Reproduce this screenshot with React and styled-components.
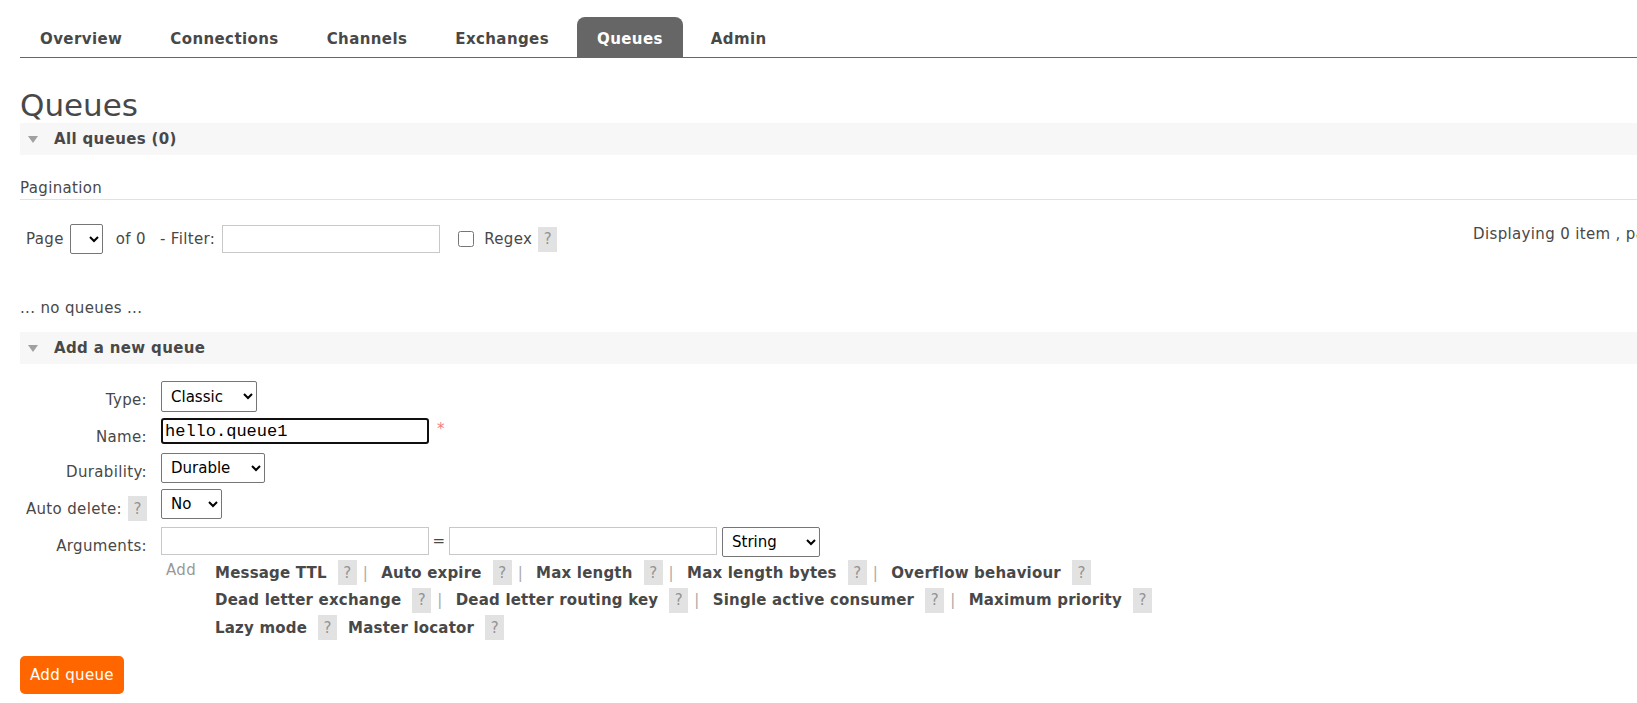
import React from 'react';
import styled, { createGlobalStyle } from 'styled-components';

const GlobalStyle = createGlobalStyle`
  html, body {
    margin: 0;
    padding: 0;
    overflow: hidden;
    background: #fff;
  }
  body {
    font-family: 'DejaVu Sans', Verdana, sans-serif;
    font-size: 15px;
    letter-spacing: 0.35px;
    color: #484848;
  }
`;

const Page = styled.div`
  width: 1695px;
  padding: 17px 0 0 20px;
`;

const Menu = styled.ul`
  display: flex;
  margin: 0;
  padding: 0;
  list-style: none;
  border-bottom: 1px solid #666;
`;

const Tab = styled.li`
  height: 40px;
  box-sizing: border-box;
  padding: 4px 20px 0;
  line-height: 36px;
  margin-right: 8px;
  font-size: 15px;
  font-weight: bold;
  letter-spacing: 0.4px;
  color: ${p => (p.$selected ? '#fff' : '#484848')};
  background: ${p => (p.$selected ? '#666' : 'transparent')};
  border-radius: 8px 8px 0 0;
`;

const Title = styled.h1`
  margin: 30px 0 1px;
  font-size: 31px;
  line-height: 34px;
  font-weight: normal;
  letter-spacing: 0;
  color: #484848;
`;

const SectionHeader = styled.h2`
  display: flex;
  align-items: center;
  height: 32px;
  margin: 0;
  padding-left: 8px;
  background: #f7f7f7;
  font-size: 15px;
  font-weight: bold;
  color: #484848;
`;

const Arrow = styled.span`
  width: 0;
  height: 0;
  margin: 1px 16px 0 0;
  border-left: 5px solid transparent;
  border-right: 5px solid transparent;
  border-top: 7px solid #a0a0a0;
`;

const SubHeading = styled.h3`
  margin: 24px 0 0;
  padding-bottom: 2px;
  font-size: 15px;
  line-height: 18px;
  font-weight: normal;
  border-bottom: 1px solid #e2e2e2;
`;

const PaginationRow = styled.div`
  display: flex;
  align-items: center;
  height: 30px;
  margin-top: 24px;
  padding-left: 6px;
`;

const Text = styled.span`
  margin-left: ${p => p.$ml || 0}px;
  line-height: 18px;
  white-space: nowrap;
`;

const Displaying = styled.span`
  align-self: flex-start;
  margin-left: auto;
  padding-top: 1px;
  line-height: 18px;
  white-space: nowrap;
`;

const Select = styled.select`
  width: ${p => p.$w}px;
  height: ${p => p.$h || 30}px;
  margin-left: ${p => p.$ml || 0}px;
  padding: 0 2px 0 5px;
  font-family: 'DejaVu Sans', Verdana, sans-serif;
  font-size: 15px;
  color: #000;
  background: #fff;
  border: 1px solid #767676;
  border-radius: 2px;
  box-sizing: border-box;
`;

const TextInput = styled.input`
  width: ${p => p.$w}px;
  height: 28px;
  margin-left: ${p => p.$ml || 0}px;
  padding: 0 3px;
  font-family: 'DejaVu Sans', Verdana, sans-serif;
  font-size: 15px;
  border: 1px solid #c8c8c8;
  border-radius: 0;
  box-sizing: border-box;
  outline: none;
`;

const NameInput = styled.input`
  width: 268px;
  height: 26px;
  padding: 0 2px;
  font-family: 'Liberation Mono', 'DejaVu Sans Mono', monospace;
  font-size: 17px;
  letter-spacing: 0;
  color: #000;
  border: 2px solid #101010;
  border-radius: 3px;
  box-sizing: border-box;
  outline: none;
`;

const Checkbox = styled.input`
  width: 16px;
  height: 16px;
  margin: 0 0 0 18px;
`;

const Help = styled.span`
  display: inline-flex;
  align-items: center;
  justify-content: center;
  flex: none;
  width: 19px;
  height: 25px;
  margin-left: ${p => p.$ml || 0}px;
  background: #e2e2e2;
  color: #939393;
  font-weight: normal;
  font-size: 15px;
  letter-spacing: 0;
`;

const NoItems = styled.p`
  margin: 45px 0 15px;
  line-height: 18px;
`;

const Form = styled.div`
  display: grid;
  grid-template-columns: 127px auto;
  column-gap: 14px;
  row-gap: 6px;
  align-items: start;
  margin-top: 17px;
`;

const Label = styled.label`
  display: flex;
  justify-content: flex-end;
  align-items: center;
  padding-top: ${p => (p.$withHelp ? 7 : 10)}px;
  line-height: 18px;
  white-space: nowrap;
`;

const Field = styled.div`
  display: flex;
  align-items: flex-start;
  height: ${p => (p.$h ? `${p.$h}px` : 'auto')};
`;

const Required = styled.span`
  margin: 2px 0 0 8px;
  color: #f08080;
  font-size: 15px;
`;

const ArgsBlock = styled.div`
  display: flex;
  flex-direction: column;
`;

const ArgsInputs = styled.div`
  display: flex;
  align-items: flex-start;
`;

const Equals = styled.span`
  width: 20px;
  line-height: 28px;
  text-align: center;
`;

const ArgLinks = styled.div`
  display: flex;
  margin-top: 2px;
`;

const AddLabel = styled.span`
  width: 54px;
  padding-left: 5px;
  box-sizing: border-box;
  line-height: 22px;
  color: #999;
`;

const LinkRows = styled.div`
  display: flex;
  flex-direction: column;
`;

const LinkRow = styled.div`
  display: flex;
  align-items: center;
  height: 27.5px;
`;

const ArgLink = styled.span`
  font-weight: bold;
  letter-spacing: 0.2px;
  color: #484848;
  white-space: nowrap;
`;

const Sep = styled.span`
  margin: 0 13px 0 6px;
  color: #aaa;
`;

const Gap = styled.span`
  width: 11px;
`;

const AddButton = styled.button`
  display: block;
  height: 38px;
  margin-top: 14px;
  padding: 0 10px;
  font-family: 'DejaVu Sans', Verdana, sans-serif;
  font-size: 15px;
  letter-spacing: 0.35px;
  color: #fff;
  background: #f60;
  border: none;
  border-radius: 5px;
`;

const tabs = ['Overview', 'Connections', 'Channels', 'Exchanges', 'Queues', 'Admin'];

const argRows = [
  { sep: true, items: ['Message TTL', 'Auto expire', 'Max length', 'Max length bytes', 'Overflow behaviour'] },
  { sep: true, items: ['Dead letter exchange', 'Dead letter routing key', 'Single active consumer', 'Maximum priority'] },
  { sep: false, items: ['Lazy mode', 'Master locator'] },
];

const App = () => {
  return (
    <Page>
      <GlobalStyle />
      <Menu>
        {tabs.map(t => (
          <Tab key={t} $selected={t === 'Queues'}>{t}</Tab>
        ))}
      </Menu>

      <Title>Queues</Title>
      <SectionHeader>
        <Arrow />
        All queues (0)
      </SectionHeader>

      <SubHeading>Pagination</SubHeading>
      <PaginationRow>
        <Text>Page</Text>
        <Select $w={33} $ml={6} defaultValue="" />
        <Text $ml={13}>of 0</Text>
        <Text $ml={14}>- Filter:</Text>
        <TextInput $w={218} $ml={7} />
        <Checkbox type="checkbox" />
        <Text $ml={10}>Regex</Text>
        <Help $ml={6}>?</Help>
        <Displaying>Displaying 0 item , page 0 of 0</Displaying>
      </PaginationRow>

      <NoItems>... no queues ...</NoItems>

      <SectionHeader>
        <Arrow />
        Add a new queue
      </SectionHeader>

      <Form>
        <Label>Type:</Label>
        <Field>
          <Select $w={96} $h={31} defaultValue="classic">
            <option value="classic">Classic</option>
            <option value="quorum">Quorum</option>
          </Select>
        </Field>

        <Label>Name:</Label>
        <Field $h={29}>
          <NameInput defaultValue="hello.queue1" />
          <Required>*</Required>
        </Field>

        <Label>Durability:</Label>
        <Field>
          <Select $w={104} defaultValue="durable">
            <option value="durable">Durable</option>
            <option value="transient">Transient</option>
          </Select>
        </Field>

        <Label $withHelp>
          Auto delete:
          <Help $ml={6}>?</Help>
        </Label>
        <Field>
          <Select $w={61} defaultValue="no">
            <option value="no">No</option>
            <option value="yes">Yes</option>
          </Select>
        </Field>

        <Label>Arguments:</Label>
        <ArgsBlock>
          <ArgsInputs>
            <TextInput $w={268} />
            <Equals>=</Equals>
            <TextInput $w={268} />
            <Select $w={98} $ml={5} defaultValue="string">
              <option value="string">String</option>
              <option value="number">Number</option>
              <option value="boolean">Boolean</option>
              <option value="list">List</option>
            </Select>
          </ArgsInputs>
          <ArgLinks>
            <AddLabel>Add</AddLabel>
            <LinkRows>
              {argRows.map((row, i) => (
                <LinkRow key={i}>
                  {row.items.map((name, j) => (
                    <React.Fragment key={name}>
                      {j > 0 && (row.sep ? <Sep>|</Sep> : <Gap />)}
                      <ArgLink>{name}</ArgLink>
                      <Help $ml={11}>?</Help>
                    </React.Fragment>
                  ))}
                </LinkRow>
              ))}
            </LinkRows>
          </ArgLinks>
        </ArgsBlock>
      </Form>

      <AddButton>Add queue</AddButton>
    </Page>
  );
};

export default App;
